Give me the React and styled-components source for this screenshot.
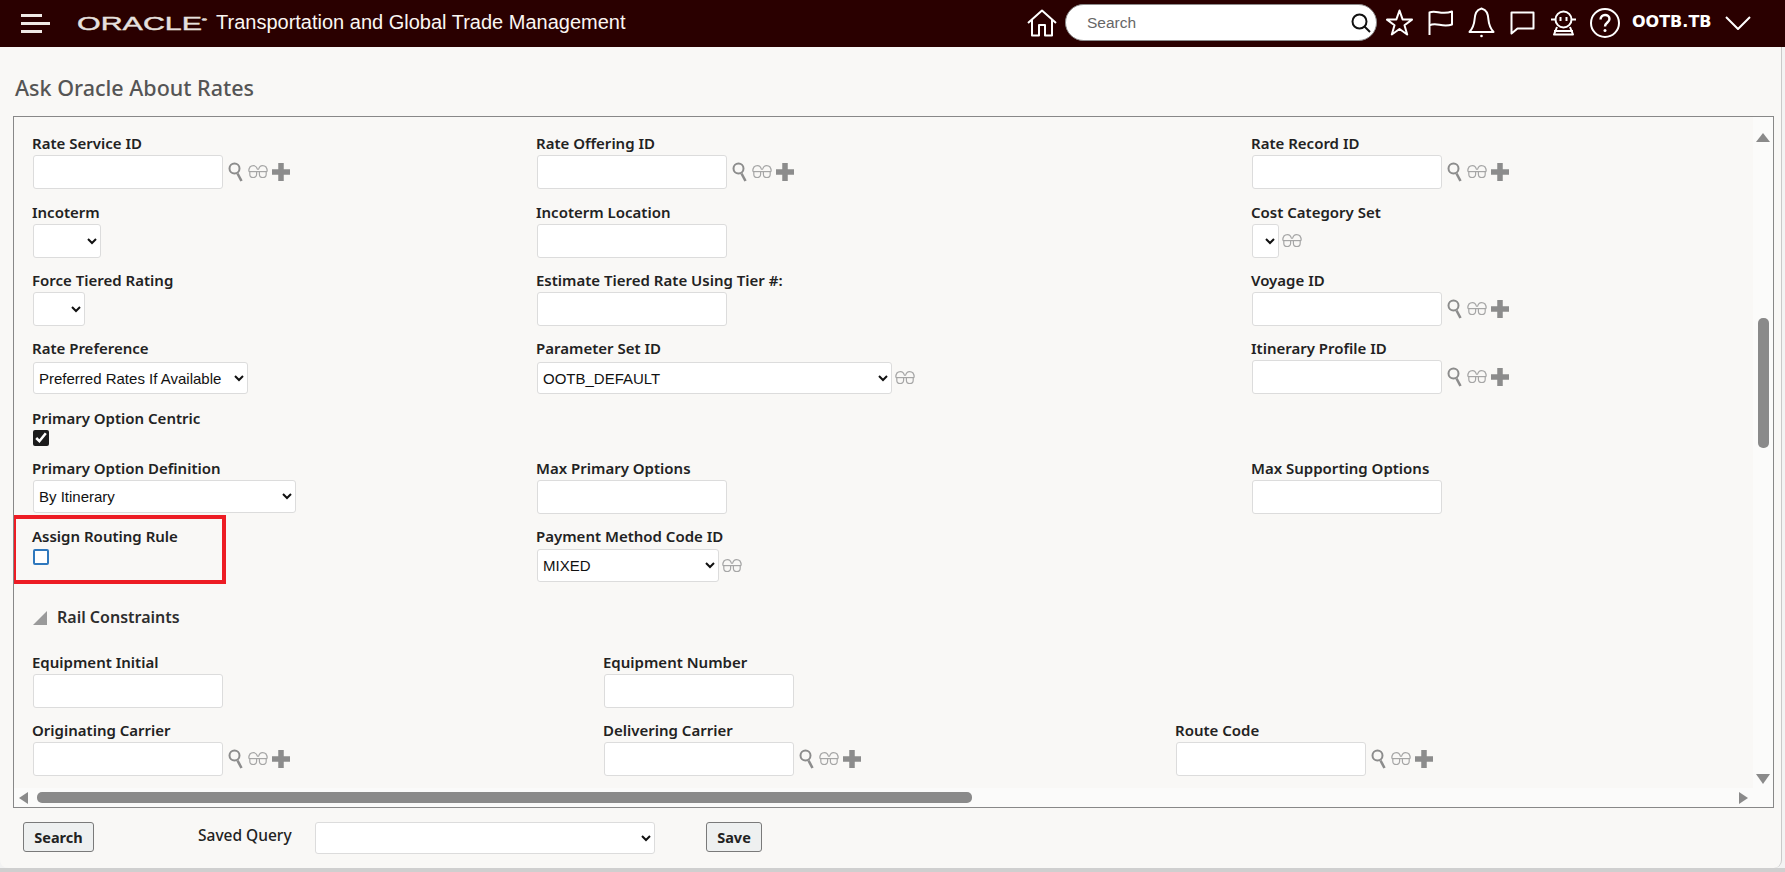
import styled, { createGlobalStyle } from "styled-components";

const GlobalStyle = createGlobalStyle`
  html, body {
    margin: 0;
    padding: 0;
    height: 100%;
    background: #fff;
    overflow: hidden;
  }
`;

const Frame = styled.div`
  width: 1785px;
  height: 872px;
  background: #f3f3f3;
  border-bottom: 4px solid #cfcfcf;
  box-sizing: border-box;
`;

const Page = styled.div`
  width: 1782px;
  height: 868px;
  background: #f9f8f6;
  border-right: 1px solid #c9c9c9;
  border-radius: 0 0 8px 8px;
  box-sizing: border-box;
`;

const TopBar = styled.header`
  height: 47px;
  background: #2a0000;
  display: flex;
  align-items: center;
  color: #fff;
  width: 1785px;
`;

const Burger = styled.div`
  display: flex;
  flex-direction: column;
  gap: 5px;
  width: 29px;
  margin-left: 21px;
`;

const BurgerLine = styled.span`
  height: 3px;
  width: ${(p) => p.$w}px;
  background: #efe9e6;
`;

const LogoBox = styled.div`
  width: 139px;
  margin: -3px 0 0 27px;
  display: flex;
`;

const Logo = styled.span`
  display: inline-block;
  font-family: "Liberation Sans", Arial, sans-serif;
  font-size: 19px;
  line-height: 20px;
  color: #e6e0df;
  -webkit-text-stroke: 0.4px #e6e0df;
  transform: scaleX(1.6);
  transform-origin: left center;
  white-space: nowrap;
  sup {
    font-size: 4px;
    vertical-align: 9px;
  }
`;

const Product = styled.div`
  font-family: "Liberation Sans", Arial, sans-serif;
  font-size: 20px;
  margin-top: -3px;
  white-space: nowrap;
  color: #fbf6f2;
`;

const BarRight = styled.div`
  margin-left: auto;
  display: flex;
  align-items: center;
  padding: 0 34px 2px 0;
`;

const SearchPill = styled.div`
  width: 312px;
  height: 37px;
  box-sizing: border-box;
  background: #fff;
  border: 1px solid #8c8c8c;
  border-radius: 19px;
  display: flex;
  align-items: center;
  padding: 0 5px 0 21px;
  margin: 0 9px 0 8px;
  font-family: "Liberation Sans", Arial, sans-serif;
  font-size: 15.5px;
  color: #666;
  justify-content: space-between;
`;

const BarIcon = styled.svg`
  display: block;
  margin-left: ${(p) => p.$ml || 0}px;
  fill: none;
  stroke: #fff;
  stroke-width: 2;
  stroke-linejoin: round;
`;

const UserName = styled.div`
  margin-left: 12px;
  width: 93px;
  font-family: "DejaVu Sans", Verdana, sans-serif;
  font-weight: 700;
  font-size: 16px;
  white-space: nowrap;
  margin-top: -2px;
`;

const Title = styled.h1`
  margin: 0;
  padding: 29px 0 0 15px;
  height: 69px;
  box-sizing: border-box;
  font-family: "Noto Sans", "Open Sans", sans-serif;
  font-weight: 500;
  font-size: 21.5px;
  line-height: 24px;
  color: #555;
`;

const Panel = styled.section`
  margin-left: 13px;
  width: 1761px;
  height: 692px;
  box-sizing: border-box;
  border: 1px solid #888;
  display: grid;
  grid-template-columns: 1739px 1fr;
  grid-template-rows: 671px 1fr;
  background: #fbfbfa;
`;

const Viewport = styled.div`
  overflow: hidden;
  background: #f9f8f6;
  padding: 17px 0 0 18px;
  box-sizing: border-box;
`;

const Row = styled.div`
  display: grid;
  grid-template-columns: ${(p) => p.$cols || "504px 715px 1fr"};
  height: ${(p) => p.$h}px;
`;

const Field = styled.div`
  position: relative;
  ${(p) =>
    p.$marked &&
    `&::after {
      content: "";
      position: absolute;
      left: -20px;
      top: -12px;
      width: 214px;
      height: 69px;
      box-sizing: border-box;
      border: 4px solid #ed1c24;
    }`}
`;

const Label = styled.div`
  font-family: "Noto Sans", "Open Sans", sans-serif;
  font-weight: 600;
  font-size: 15px;
  line-height: 18px;
  height: 20px;
  color: #222;
  white-space: nowrap;
`;

const Controls = styled.div`
  display: flex;
  align-items: center;
  margin: ${(p) => p.$mt || 1}px 0 0 1px;
`;

const TextBox = styled.input`
  width: 190px;
  height: 34px;
  box-sizing: border-box;
  background: #fff;
  border: 1px solid #dcdcdc;
  border-radius: 3px;
  padding: 0 6px;
  margin: 0;
`;

const Dropdown = styled.select`
  width: ${(p) => p.$w}px;
  height: ${(p) => p.$h || 33}px;
  box-sizing: border-box;
  background: #fff;
  border: 1px solid #dcdcdc;
  border-radius: 3px;
  padding: 0 0 0 1px;
  margin: 0;
  font-family: "Liberation Sans", Arial, sans-serif;
  font-size: 15px;
  color: #111;
`;

const CheckedBox = styled.input`
  width: 16px;
  height: 16px;
  margin: 0;
  accent-color: #1c1c1c;
  display: block;
`;

const EmptyBox = styled.input`
  appearance: none;
  width: 16px;
  height: 16px;
  margin: 0;
  box-sizing: border-box;
  background: #fff;
  border: 2px solid #2f78bd;
  border-radius: 2px;
  display: block;
`;

const LookupIcon = styled.svg`
  display: block;
  flex: none;
  fill: none;
  stroke: #8c8c8c;
`;

const SectionHead = styled.div`
  display: flex;
  align-items: center;
  height: 58px;
  box-sizing: border-box;
  padding-bottom: 15px;
`;

const Corner = styled.span`
  width: 0;
  height: 0;
  margin: 2px 9px 0 1px;
  border-style: solid;
  border-width: 0 0 14px 14px;
  border-color: transparent transparent #9a9a9a transparent;
`;

const SectionTitle = styled.div`
  font-family: "Noto Sans", "Open Sans", sans-serif;
  font-weight: 600;
  font-size: 16px;
  margin-left: 1px;
  color: #2e2e2e;
`;

const VBar = styled.div`
  display: flex;
  flex-direction: column;
  align-items: center;
  padding: 16px 0 4px;
  box-sizing: border-box;
  grid-row: 1;
  grid-column: 2;
`;

const ArrowUp = styled.span`
  border-style: solid;
  border-width: 0 7px 9px 7px;
  border-color: transparent transparent #8a8a8a transparent;
`;

const ArrowDown = styled.span`
  margin-top: auto;
  border-style: solid;
  border-width: 10px 7px 0 7px;
  border-color: #8a8a8a transparent transparent transparent;
`;

const VThumb = styled.div`
  margin-top: 176px;
  width: 11px;
  height: 130px;
  border-radius: 5px;
  background: #8a8a8a;
`;

const HBar = styled.div`
  grid-row: 2;
  grid-column: 1;
  display: flex;
  align-items: center;
  padding: 0 5px 0 5px;
`;

const ArrowLeft = styled.span`
  border-style: solid;
  border-width: 6px 9px 6px 0;
  border-color: transparent #8a8a8a transparent transparent;
`;

const ArrowRight = styled.span`
  margin-left: auto;
  border-style: solid;
  border-width: 6px 0 6px 9px;
  border-color: transparent transparent transparent #8a8a8a;
`;

const HThumb = styled.div`
  margin-left: 9px;
  width: 935px;
  height: 11px;
  border-radius: 5px;
  background: #8a8a8a;
`;

const Footer = styled.div`
  display: flex;
  align-items: flex-start;
  padding: 14px 0 0 23px;
`;

const Button = styled.button`
  width: ${(p) => p.$w}px;
  height: 30px;
  padding: 0;
  box-sizing: border-box;
  background: #eef0f0;
  border: 1px solid #7a7a7a;
  border-radius: 3px;
  font-family: "Noto Sans", "Open Sans", sans-serif;
  font-weight: 700;
  font-size: 14.5px;
  color: #222;
`;

const FooterLabel = styled.div`
  margin-left: 104px;
  width: 117px;
  line-height: 26px;
  font-family: "Noto Sans", "Open Sans", sans-serif;
  font-weight: 500;
  font-size: 15.5px;
  color: #222;
`;

const FooterSelect = styled(Dropdown)`
  margin-right: 51px;
`;

function Magnifier() {
  return (
    <LookupIcon width="16" height="20" viewBox="0 0 16 20" style={{ marginLeft: 5 }}>
      <circle cx="6.5" cy="6.5" r="5" strokeWidth="2" />
      <path d="M9.5 11.5 L13.5 19" strokeWidth="2.6" />
    </LookupIcon>
  );
}

function Glasses({ ml = 4 }) {
  return (
    <LookupIcon
      width="20"
      height="14"
      viewBox="0 0 20 14"
      style={{ marginLeft: ml, stroke: "#a6a6a6" }}
      strokeWidth="1.2"
    >
      <path d="M0.8 6.5 C0.8 2.5 3 0.7 5.5 0.7 C7.5 0.7 8.8 2.2 9.6 4.6 M19.2 6.5 C19.2 2.5 17 0.7 14.5 0.7 C12.5 0.7 11.2 2.2 10.4 4.6" />
      <path d="M0.8 6.6 H19.2" />
      <path d="M1.8 6.6 V9.2 C1.8 13.6 8.6 13.6 8.6 9.2 V6.6 M11.4 6.6 V9.2 C11.4 13.6 18.2 13.6 18.2 9.2 V6.6" />
    </LookupIcon>
  );
}

function Plus() {
  return (
    <LookupIcon width="18" height="18" viewBox="0 0 18 18" style={{ marginLeft: 4 }} strokeWidth="5.5">
      <path d="M9 0 V18 M0 9 H18" />
    </LookupIcon>
  );
}

function Lookup() {
  return (
    <Controls>
      <TextBox />
      <Magnifier />
      <Glasses />
      <Plus />
    </Controls>
  );
}

const Plain = () => (
  <Controls>
    <TextBox />
  </Controls>
);

function LabeledField({ label, children, marked }) {
  return (
    <Field $marked={marked}>
      <Label>{label}</Label>
      {children}
    </Field>
  );
}

function SelectControl({ w, h, mt, value, icon }) {
  return (
    <Controls $mt={mt}>
      <Dropdown $w={w} $h={h} defaultValue={value}>
        <option value={value}>{value}</option>
      </Dropdown>
      {icon && <Glasses ml={3} />}
    </Controls>
  );
}

export default function App() {
  return (
    <Frame>
      <GlobalStyle />
      <Page>
        <TopBar>
          <Burger>
            <BurgerLine $w={21} />
            <BurgerLine $w={29} />
            <BurgerLine $w={21} />
          </Burger>
          <LogoBox>
            <Logo>
              ORACLE<sup>®</sup>
            </Logo>
          </LogoBox>
          <Product>Transportation and Global Trade Management</Product>
          <BarRight>
            <BarIcon width="30" height="28" viewBox="0 0 30 28">
              <path d="M1 14 L15 1.5 L29 14" />
              <path d="M5 11 V26.5 H12 V16 H18 V26.5 H25 V11" />
            </BarIcon>
            <SearchPill>
              Search
              <svg width="20" height="20" viewBox="0 0 20 20" fill="none" stroke="#111" strokeWidth="2">
                <circle cx="8.5" cy="8.5" r="7" />
                <path d="M13.5 13.5 L19 19" />
              </svg>
            </SearchPill>
            <BarIcon width="27" height="27" viewBox="0 0 27 27">
              <path d="M13.5 1.5 L16.6 10.4 L26 10.6 L18.5 16.3 L21.2 25.5 L13.5 20 L5.8 25.5 L8.5 16.3 L1 10.6 L10.4 10.4 Z" />
            </BarIcon>
            <BarIcon $ml={15} width="25" height="25" viewBox="0 0 25 25">
              <path d="M1.5 25 V2.5 C8 -0.5 13 5.5 24 1.5 V14.5 C14 18 8 11.5 1.5 15.5" />
            </BarIcon>
            <BarIcon $ml={15} width="27" height="31" viewBox="0 0 27 31">
              <path d="M13.5 1.5 C8 3 7 7 6.5 13 C6 19 4 22 1.5 25 H25.5 C23 22 21 19 20.5 13 C20 7 19 3 13.5 1.5 Z" />
              <circle cx="13.5" cy="29" r="1.3" fill="#fff" stroke="none" />
            </BarIcon>
            <BarIcon $ml={15} width="25" height="24" viewBox="0 0 25 24">
              <path d="M1.5 1.5 H23.5 V17.5 H7.5 L1.5 22.5 Z" />
            </BarIcon>
            <BarIcon $ml={15} width="27" height="26" viewBox="0 0 27 26">
              <circle cx="13.5" cy="9.5" r="8" />
              <path d="M10.5 7 V11 M16.5 7 V11" />
              <path d="M1 9.5 H5 M22 9.5 H26" />
              <path d="M7 17 L4 24.5 H23 L20 17" />
              <path d="M4 21 H23" />
            </BarIcon>
            <BarIcon $ml={13} width="30" height="30" viewBox="0 0 30 30">
              <circle cx="15" cy="15" r="14" />
              <path d="M10.5 11.5 C10.5 5.5 19.5 5.5 19.5 11 C19.5 14.5 15 14.5 15 18.5" strokeWidth="2.4" />
              <circle cx="15" cy="22.5" r="1.5" fill="#fff" stroke="none" />
            </BarIcon>
            <UserName>OOTB.TB</UserName>
            <BarIcon width="26" height="14" viewBox="0 0 26 14" strokeWidth="2.4">
              <path d="M1 1 L13 13 L25 1" />
            </BarIcon>
          </BarRight>
        </TopBar>

        <Title>Ask Oracle About Rates</Title>

        <Panel>
          <Viewport>
            <Row $h={69}>
              <LabeledField label="Rate Service ID"><Lookup /></LabeledField>
              <LabeledField label="Rate Offering ID"><Lookup /></LabeledField>
              <LabeledField label="Rate Record ID"><Lookup /></LabeledField>
            </Row>
            <Row $h={68}>
              <LabeledField label="Incoterm"><SelectControl w={68} h={34} value="" /></LabeledField>
              <LabeledField label="Incoterm Location"><Plain /></LabeledField>
              <LabeledField label="Cost Category Set"><SelectControl w={27} h={34} value="" icon /></LabeledField>
            </Row>
            <Row $h={68}>
              <LabeledField label="Force Tiered Rating"><SelectControl w={52} h={34} value="" /></LabeledField>
              <LabeledField label="Estimate Tiered Rate Using Tier #:"><Plain /></LabeledField>
              <LabeledField label="Voyage ID"><Lookup /></LabeledField>
            </Row>
            <Row $h={70}>
              <LabeledField label="Rate Preference">
                <SelectControl w={215} h={32} mt={3} value="Preferred Rates If Available" />
              </LabeledField>
              <LabeledField label="Parameter Set ID">
                <SelectControl w={355} h={32} mt={3} value="OOTB_DEFAULT" icon />
              </LabeledField>
              <LabeledField label="Itinerary Profile ID"><Lookup /></LabeledField>
            </Row>
            <Row $h={50}>
              <LabeledField label="Primary Option Centric">
                <Controls><CheckedBox type="checkbox" defaultChecked /></Controls>
              </LabeledField>
            </Row>
            <Row $h={68}>
              <LabeledField label="Primary Option Definition">
                <SelectControl w={263} h={33} value="By Itinerary" />
              </LabeledField>
              <LabeledField label="Max Primary Options"><Plain /></LabeledField>
              <LabeledField label="Max Supporting Options"><Plain /></LabeledField>
            </Row>
            <Row $h={68}>
              <LabeledField label="Assign Routing Rule" marked>
                <Controls $mt={2}><EmptyBox type="checkbox" /></Controls>
              </LabeledField>
              <LabeledField label="Payment Method Code ID">
                <SelectControl w={182} h={33} mt={2} value="MIXED" icon />
              </LabeledField>
            </Row>
            <SectionHead>
              <Corner />
              <SectionTitle>Rail Constraints</SectionTitle>
            </SectionHead>
            <Row $h={68} $cols="571px 572px 1fr">
              <LabeledField label="Equipment Initial"><Plain /></LabeledField>
              <LabeledField label="Equipment Number"><Plain /></LabeledField>
            </Row>
            <Row $h={68} $cols="571px 572px 1fr">
              <LabeledField label="Originating Carrier"><Lookup /></LabeledField>
              <LabeledField label="Delivering Carrier"><Lookup /></LabeledField>
              <LabeledField label="Route Code"><Lookup /></LabeledField>
            </Row>
          </Viewport>
          <VBar>
            <ArrowUp />
            <VThumb />
            <ArrowDown />
          </VBar>
          <HBar>
            <ArrowLeft />
            <HThumb />
            <ArrowRight />
          </HBar>
        </Panel>

        <Footer>
          <Button $w={71}>Search</Button>
          <FooterLabel>Saved Query</FooterLabel>
          <FooterSelect $w={340} $h={32} defaultValue="">
            <option value=""></option>
          </FooterSelect>
          <Button $w={56}>Save</Button>
        </Footer>
      </Page>
    </Frame>
  );
}
